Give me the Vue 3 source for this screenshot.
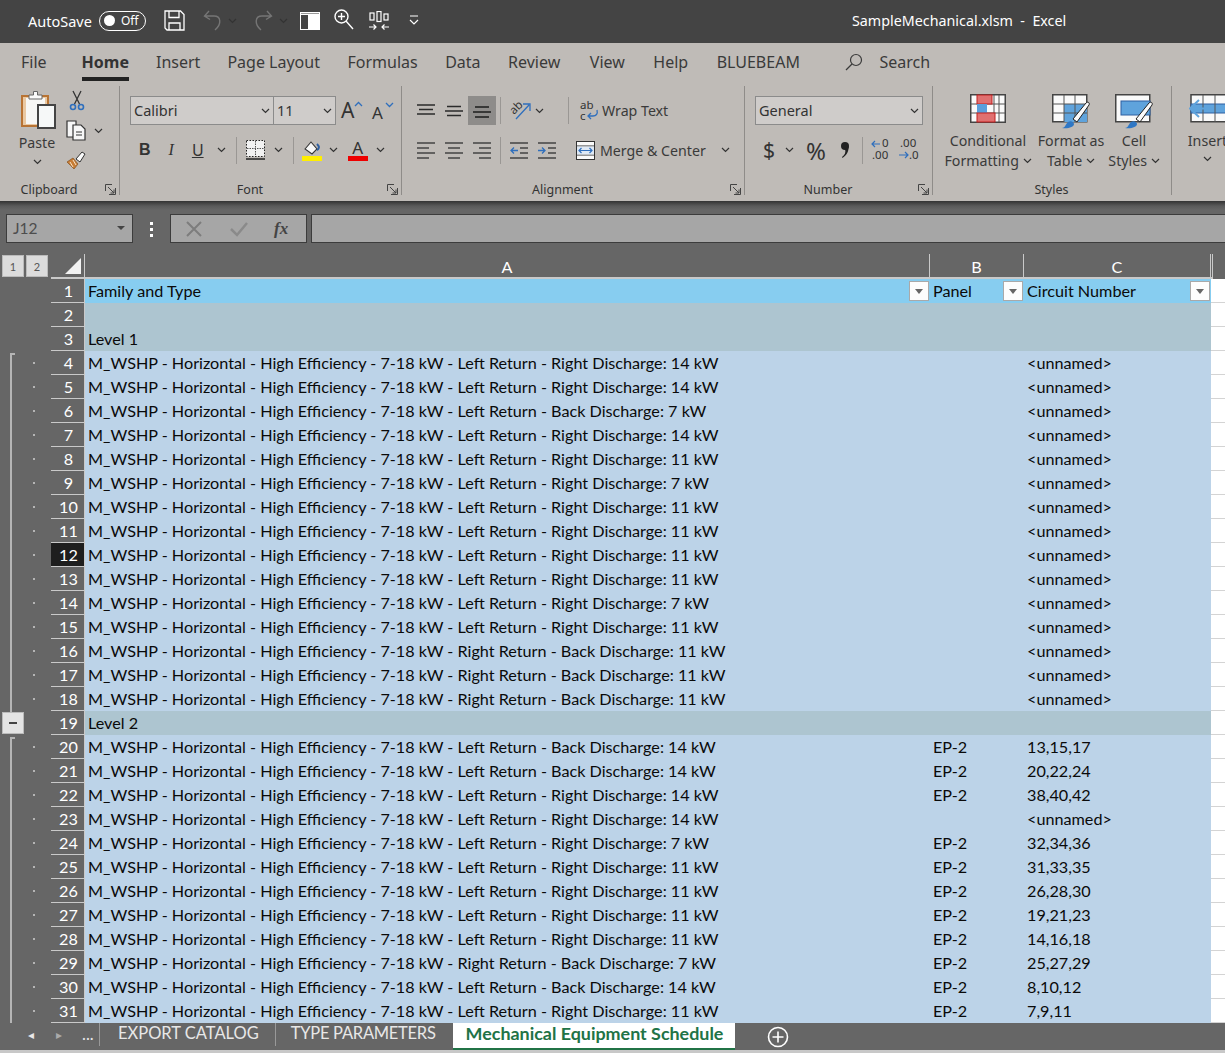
<script setup>
import { h } from 'vue'

const Chev = () =>
  h('svg', { width: 9, height: 6, viewBox: '0 0 9 6', class: 'chev-svg' }, [
    h('path', { d: 'M1 1l3.5 3.5L8 1', fill: 'none', stroke: 'currentColor', 'stroke-width': 1.2 })
  ])
const Launcher = () =>
  h('svg', { width: 11, height: 11, viewBox: '0 0 11 11', class: 'launcher' }, [
    h('path', { d: 'M7 .5H.5V7M10.5 4v6.5H4M3 3l6 6M9 5.5V9H5.5', fill: 'none', stroke: '#444', 'stroke-width': 1 })
  ])

const tabs = ['Insert', 'Page Layout', 'Formulas', 'Data', 'Review', 'View', 'Help', 'BLUEBEAM']

const prefix = 'M_WSHP - Horizontal - High Efficiency - 7-18 kW - '
const LR = 'Left Return - Right Discharge: '
const LB = 'Left Return - Back Discharge: '
const RB = 'Right Return - Back Discharge: '
const U = '<unnamed>'
const raw = [
  [LR + '14 kW', '', U], [LR + '14 kW', '', U], [LB + '7 kW', '', U], [LR + '14 kW', '', U],
  [LR + '11 kW', '', U], [LR + '7 kW', '', U], [LR + '11 kW', '', U], [LR + '11 kW', '', U],
  [LR + '11 kW', '', U], [LR + '11 kW', '', U], [LR + '7 kW', '', U], [LR + '11 kW', '', U],
  [RB + '11 kW', '', U], [RB + '11 kW', '', U], [RB + '11 kW', '', U],
  null,
  [LB + '14 kW', 'EP-2', '13,15,17'], [LB + '14 kW', 'EP-2', '20,22,24'], [LR + '14 kW', 'EP-2', '38,40,42'],
  [LR + '14 kW', '', U], [LR + '7 kW', 'EP-2', '32,34,36'], [LR + '11 kW', 'EP-2', '31,33,35'],
  [LR + '11 kW', 'EP-2', '26,28,30'], [LR + '11 kW', 'EP-2', '19,21,23'], [LR + '11 kW', 'EP-2', '14,16,18'],
  [RB + '7 kW', 'EP-2', '25,27,29'], [LB + '14 kW', 'EP-2', '8,10,12'], [LR + '11 kW', 'EP-2', '7,9,11']
]
const rows = [
  { n: 2, a: '', b: '', c: '', kind: 'level' },
  { n: 3, a: 'Level 1', b: '', c: '', kind: 'level' },
  ...raw.map((r, i) =>
    r
      ? { n: i + 4, a: prefix + r[0], b: r[1], c: r[2], kind: 'data' }
      : { n: i + 4, a: 'Level 2', b: '', c: '', kind: 'level' }
  )
]
</script>

<template>
  <div class="app">
    <!-- Title bar -->
    <header class="titlebar">
      <span class="autosave">AutoSave</span>
      <span class="toggle"><i class="knob"></i><span>Off</span></span>
      <svg class="qa save" width="21" height="21" viewBox="0 0 21 21" fill="none" stroke="#fff" stroke-width="1.3">
        <path d="M1 1h15.5L20 4.500V20H3L1 18z" />
        <path d="M5 1v6.500h10V1M5 20v-7h11v7" />
      </svg>
      <svg class="qa undo" width="19" height="21" viewBox="0 0 19 21" fill="none" stroke="#757575" stroke-width="1.4">
        <path d="M6 1L1.500 6 7 9.500M2 6h9c7 0 8 8 1 14" />
      </svg>
      <Chev class="qa-chev dim" />
      <svg class="qa redo" width="19" height="21" viewBox="0 0 19 21" fill="none" stroke="#757575" stroke-width="1.4">
        <path d="M13 1l4.500 5L12 9.500M17 6H8c-7 0-8 8-1 14" />
      </svg>
      <Chev class="qa-chev dim" />
      <svg class="qa pane" width="20" height="18" viewBox="0 0 20 18">
        <rect width="20" height="18" fill="#fff" />
        <rect x="1" y="3" width="7" height="14" fill="#444" />
        <rect x="1" y="1" width="18" height="1" fill="#999" />
      </svg>
      <svg class="qa zoomi" width="20" height="21" viewBox="0 0 20 21" fill="none" stroke="#fff" stroke-width="1.400">
        <circle cx="7.500" cy="7.500" r="6.500" />
        <path d="M12 12l7 8M7.500 4v7M4 7.500h7" />
      </svg>
      <svg class="qa arrange" width="20" height="20" viewBox="0 0 20 20" fill="none" stroke="#fff" stroke-width="1.200">
        <rect x="1" y="2" width="4" height="7" /><rect x="8" y=".5" width="4" height="10" /><rect x="15" y="3" width="4" height="6" />
        <path d="M0 16h7M4.500 13.500L7 16l-2.500 2.500M20 16h-7M15.500 13.500L13 16l2.500 2.500" />
      </svg>
      <svg class="qa customize" width="10" height="11" viewBox="0 0 10 11" fill="none" stroke="#fff" stroke-width="1.200">
        <path d="M1 1h8M1 5l4 4 4-4" />
      </svg>
      <span class="doc-title">SampleMechanical.xlsm&nbsp; -&nbsp; Excel</span>
    </header>

    <!-- Tabs -->
    <nav class="tabs">
      <span class="tab file">File</span>
      <span class="tab active">Home</span>
      <span v-for="t in tabs" :key="t" class="tab">{{ t }}</span>
      <svg class="search-ico" width="18" height="18" viewBox="0 0 18 18" fill="none" stroke="#3a3a3a" stroke-width="1.200">
        <circle cx="11" cy="7" r="5.500" /><path d="M7 11l-6 6" />
      </svg>
      <span class="search">Search</span>
    </nav>

    <!-- Ribbon -->
    <section class="ribbon">
      <div class="group g-clip">
        <div class="body clip">
          <div class="paste">
            <svg class="paste-ico" width="36" height="40" viewBox="0 0 36 40">
              <rect x="1" y="6" width="26" height="30" fill="#e9c8a2" stroke="#b87333" stroke-width="2" />
              <rect x="5" y="8" width="19" height="26" fill="#f7f7f5" />
              <path d="M8 9V5h4.500V1.500h4V5H21v4z" fill="#fafafa" stroke="#666" />
              <rect x="17" y="15" width="17" height="23" fill="#f6f8f8" stroke="#444" stroke-width="2" />
            </svg>
            <span class="lbl paste-lbl">Paste</span>
            <Chev />
          </div>
          <div class="clip-tools">
            <svg class="scissors" width="16" height="21" viewBox="0 0 16 21" fill="none">
              <path d="M4 1l6.500 13M12 1L5.500 14" stroke="#333" stroke-width="1.300" />
              <circle cx="4" cy="17" r="2.500" stroke="#2f6fbd" stroke-width="1.600" />
              <circle cx="12" cy="17" r="2.500" stroke="#2f6fbd" stroke-width="1.600" />
            </svg>
            <div class="copy-row">
              <svg width="21" height="21" viewBox="0 0 21 21" fill="#f7f7f7" stroke="#333" stroke-width="1.200">
                <path d="M1 1h9v16H1z" /><path d="M7 5h8l4 4v11H7z" /><path d="M10 12h6M10 15h6" fill="none" />
              </svg>
              <Chev class="copy-chev" />
            </div>
            <svg width="20" height="20" viewBox="0 0 20 20">
              <path d="M1 12l6-4 5 6-4 5c-2-2-5-5-7-7z" fill="#c77c35" stroke="#8a5a2b" stroke-width=".8" />
              <path d="M4 12l3 5M7 10l3 5" stroke="#f5e3c8" stroke-width="1" />
              <path d="M10 9l6-7 3 2-5 8z" fill="#fafafa" stroke="#333" stroke-width="1" />
            </svg>
          </div>
        </div>
        <div class="glabel">Clipboard</div>
        <Launcher />
      </div>

      <div class="group g-font">
        <div class="body">
          <div class="row r1">
            <div class="combo fontname"><span>Calibri</span><Chev /></div>
            <div class="combo fontsize"><span>11</span><Chev /></div>
            <span class="growA">A<svg width="9" height="6" viewBox="0 0 9 6" fill="none" stroke="#2f6fbd" stroke-width="1.300"><path d="M1 5l3.500-3.500L8 5" /></svg></span>
            <span class="growA small">A<svg width="9" height="6" viewBox="0 0 9 6" fill="none" stroke="#2f6fbd" stroke-width="1.300"><path d="M1 1l3.500 3.500L8 1" /></svg></span>
          </div>
          <div class="row r2 fontrow">
            <b class="fmt f-b">B</b>
            <i class="fmt f-i">I</i>
            <u class="fmt f-u">U</u>
            <Chev class="f-chev" />
            <span class="vsep s1"></span>
            <svg class="f-bord" width="20" height="20" viewBox="0 0 20 20" fill="#f2f2f2">
              <rect x=".5" y=".5" width="18" height="16" stroke="#222" stroke-dasharray="1.500 1.500" />
              <path d="M9.500 1v15M1 8.500h18" stroke="#555" stroke-dasharray="1.500 1" />
              <path d="M0 19h19" stroke="#222" stroke-width="1.500" />
            </svg>
            <Chev class="f-chev2" />
            <span class="vsep s2"></span>
            <svg class="f-fill" width="20" height="21" viewBox="0 0 20 21">
              <path d="M3 9l6-7 6 7-5 5z" fill="#f7f7f7" stroke="#333" stroke-width="1.100" />
              <path d="M15 10c2-1 3-3 0-6" fill="none" stroke="#2f5fa0" stroke-width="2" />
              <rect y="16" width="20" height="5" fill="#ffee00" />
            </svg>
            <Chev class="f-chev3" />
            <span class="colorA">A<i></i></span>
            <Chev class="f-chev4" />
          </div>
        </div>
        <div class="glabel">Font</div>
        <Launcher />
      </div>

      <div class="group g-align">
        <div class="body">
          <div class="row r1 alignrow">
            <svg class="al a1" width="18" height="14" viewBox="0 0 18 14" stroke="#2b2b2b" stroke-width="1.300"><path d="M0 1h18M2 5.500h14M0 10h18" /></svg>
            <svg class="al a2" width="18" height="14" viewBox="0 0 18 14" stroke="#2b2b2b" stroke-width="1.300"><path d="M2 2.500h14M0 7h18M2 11.500h14" /></svg>
            <span class="al-on"><svg width="18" height="14" viewBox="0 0 18 14" stroke="#1d1d1d" stroke-width="1.300"><path d="M2 3h14M0 8h18M2 13h14" /></svg></span>
            <span class="vsep s3"></span>
            <svg class="orient" width="22" height="20" viewBox="0 0 22 20">
              <text x="2" y="11" transform="rotate(-45 7 9)" class="svgt">ab</text>
              <path d="M7 18L20 4M14 3h7v7" fill="none" stroke="#2f6fbd" stroke-width="1.300" />
            </svg>
            <Chev class="or-chev" />
            <span class="vsep s4"></span>
            <svg class="wrap-ico" width="19" height="20" viewBox="0 0 19 20">
              <text x="0" y="8" class="svgt">ab</text><text x="0" y="19" class="svgt">c</text>
              <path d="M17 9c1 4-1 6-4 6H8M11 12l-3 3 3 3" fill="none" stroke="#2f6fbd" stroke-width="1.300" />
            </svg>
            <span class="lbl wrap-lbl">Wrap Text</span>
          </div>
          <div class="row r2 alignrow">
            <svg class="al a1" width="18" height="17" viewBox="0 0 18 17" stroke="#444" stroke-width="1.300"><path d="M0 1h18M0 6h12M0 11h18M0 16h12" /></svg>
            <svg class="al a2" width="18" height="17" viewBox="0 0 18 17" stroke="#444" stroke-width="1.300"><path d="M0 1h18M3 6h12M0 11h18M3 16h12" /></svg>
            <svg class="al a3" width="18" height="17" viewBox="0 0 18 17" stroke="#444" stroke-width="1.300"><path d="M0 1h18M6 6h12M0 11h18M6 16h12" /></svg>
            <span class="vsep s5"></span>
            <svg class="ind i1" width="18" height="17" viewBox="0 0 18 17" fill="none" stroke-width="1.300">
              <path d="M0 1h18M10 6h8M10 11h8M0 16h18" stroke="#444" /><path d="M8 8.500H1M4 5.500L1 8.500l3 3" stroke="#2f6fbd" />
            </svg>
            <svg class="ind i2" width="18" height="17" viewBox="0 0 18 17" fill="none" stroke-width="1.300">
              <path d="M0 1h18M10 6h8M10 11h8M0 16h18" stroke="#444" /><path d="M0 8.500h7M4 5.500l3 3-3 3" stroke="#2f6fbd" />
            </svg>
            <svg class="merge-ico" width="19" height="19" viewBox="0 0 19 19" fill="#fafafa">
              <rect x=".5" y=".5" width="18" height="18" stroke="#333" />
              <path d="M1 5h17M1 14h17" stroke="#333" />
              <rect x="1" y="5.500" width="17" height="8" fill="#dfe9f5" />
              <path d="M3 9.500h13M5.500 7L3 9.500 5.500 12M13.500 7l2.500 2.500-2.500 2.500" fill="none" stroke="#2f6fbd" stroke-width="1.200" />
            </svg>
            <span class="lbl merge-lbl">Merge &amp; Center</span>
            <Chev class="merge-chev" />
          </div>
        </div>
        <div class="glabel">Alignment</div>
        <Launcher />
      </div>

      <div class="group g-num">
        <div class="body">
          <div class="row r1">
            <div class="combo general"><span>General</span><Chev /></div>
          </div>
          <div class="row r2 numrow">
            <span class="dollar">$</span>
            <Chev class="d-chev" />
            <span class="pct">%</span>
            <svg class="comma" width="10" height="18" viewBox="0 0 10 18">
              <circle cx="5" cy="5" r="4" fill="#222" />
              <path d="M8.500 5c.5 5-1.500 9-6 12l-.5-1c3-2 4-5 3-8z" fill="#222" />
            </svg>
            <span class="vsep s6"></span>
            <svg class="dec d1" width="20" height="24" viewBox="0 0 20 24">
              <text x="11" y="9" class="svgn">0</text><text x="1" y="21" class="svgn">.00</text>
              <path d="M9 6H1M4 3L1 6l3 3" fill="none" stroke="#2f6fbd" stroke-width="1.200" />
            </svg>
            <svg class="dec d2" width="20" height="24" viewBox="0 0 20 24">
              <text x="1" y="9" class="svgn">.00</text><text x="10" y="21" class="svgn">.0</text>
              <path d="M0 17h9M6 14l3 3-3 3" fill="none" stroke="#2f6fbd" stroke-width="1.200" />
            </svg>
          </div>
        </div>
        <div class="glabel">Number</div>
        <Launcher />
      </div>

      <div class="group g-styles">
        <div class="body styles">
          <div class="bigbtn b-cond">
            <svg class="ico29" width="36" height="29" viewBox="0 0 36 29">
              <rect x=".75" y=".75" width="34.500" height="27.500" fill="#fafafa" stroke="#444" stroke-width="1.500" />
              <path d="M12 1v27M24 1v27M29 1v27M1 10h34M1 19h34" stroke="#555" />
              <rect x="7" y="1" width="15" height="9" fill="#e07070" stroke="#c02020" />
              <rect x="7" y="10" width="10" height="9" fill="#5a9fdc" />
              <rect x="7" y="19" width="18" height="9" fill="#e07070" stroke="#c02020" />
            </svg>
            <span class="lbl">Conditional</span>
            <span class="lbl">Formatting <Chev /></span>
          </div>
          <div class="bigbtn b-table">
            <svg class="ico35" width="38" height="35" viewBox="0 0 38 35">
              <rect x=".75" y=".75" width="34" height="27" fill="#fafafa" stroke="#444" stroke-width="1.500" />
              <rect x="12" y="10" width="23" height="18" fill="#5fa3dc" />
              <path d="M12 1v27M23 1v27M1 10h34M1 19h34" stroke="#555" />
              <path d="M21 25L34 9c2-2 4 0 3 2L25 28z" fill="#fafafa" stroke="#222" />
              <path d="M10 34c3 0 3-3 6-6 3-2 6 0 6 2 0 3-6 5-12 4z" fill="#2f77c4" />
            </svg>
            <span class="lbl">Format as</span>
            <span class="lbl">Table <Chev /></span>
          </div>
          <div class="bigbtn b-cell">
            <svg class="ico35" width="38" height="35" viewBox="0 0 38 35">
              <rect x=".75" y=".75" width="34" height="27" fill="#fafafa" stroke="#444" stroke-width="1.500" />
              <rect x="6" y="7" width="29" height="14" fill="#5fa3dc" stroke="#2f5fa0" />
              <path d="M21 25L34 9c2-2 4 0 3 2L25 28z" fill="#fafafa" stroke="#222" />
              <path d="M10 34c3 0 3-3 6-6 3-2 6 0 6 2 0 3-6 5-12 4z" fill="#2f77c4" />
            </svg>
            <span class="lbl">Cell</span>
            <span class="lbl">Styles <Chev /></span>
          </div>
        </div>
        <div class="glabel">Styles</div>
      </div>

      <div class="group g-cells">
        <div class="body cells">
          <div class="bigbtn b-insert">
            <svg class="ico29" width="38" height="29" viewBox="0 0 38 29">
              <rect x="2" y=".75" width="36" height="27" fill="#fafafa" stroke="#444" stroke-width="1.500" />
              <rect x="2" y="10" width="36" height="9" fill="#5fa3dc" stroke="#2f5fa0" />
              <path d="M14 1v27M26 1v27" stroke="#555" />
              <path d="M24 14.500H2M10 6l-9 8.500 9 8.500" fill="none" stroke="#5fa3dc" stroke-width="2" />
            </svg>
            <span class="lbl">Insert</span>
            <Chev />
          </div>
        </div>
      </div>
    </section>

    <!-- Formula bar -->
    <section class="formula">
      <div class="namebox"><span>J12</span><i class="caret"></i></div>
      <div class="dots"><i></i><i></i><i></i></div>
      <div class="fxbtns">
        <svg width="18" height="16" viewBox="0 0 18 16" stroke="#7d7d7d" stroke-width="2" fill="none"><path d="M2 1l14 14M16 1L2 15" /></svg>
        <svg width="18" height="16" viewBox="0 0 18 16" stroke="#8a8a8a" stroke-width="2.500" fill="none"><path d="M1 8l6 6L17 2" /></svg>
        <span class="fx">fx</span>
      </div>
      <div class="fxinput"></div>
    </section>

    <!-- Sheet -->
    <section class="sheet">
      <div class="line head">
        <div class="gutter topbtns"><span class="lvl">1</span><span class="lvl">2</span></div>
        <div class="rh corner"><i></i></div>
        <div class="ch a">A</div>
        <div class="ch b">B</div>
        <div class="ch c">C</div>
        <div class="ch d"></div>
      </div>

      <div class="line">
        <div class="gutter"></div>
        <div class="rh">1</div>
        <div class="cell a hdr">Family and Type<span class="flt"><i></i></span></div>
        <div class="cell b hdr">Panel<span class="flt"><i></i></span></div>
        <div class="cell c hdr">Circuit Number<span class="flt"><i></i></span></div>
        <div class="rest"></div>
      </div>

      <div v-for="r in rows" :key="r.n" class="line">
        <div class="gutter">
          <span v-if="r.kind === 'data'" class="dot"></span>
          <span v-if="r.n === 19" class="minus"><i></i></span>
        </div>
        <div class="rh" :class="{ sel: r.n === 12 }">{{ r.n }}</div>
        <div class="cell a" :class="r.kind">{{ r.a }}</div>
        <div class="cell b" :class="r.kind">{{ r.b }}</div>
        <div class="cell c" :class="r.kind">{{ r.c }}</div>
        <div class="rest"></div>
      </div>

      <span class="bracket br1"></span>
      <span class="bracket br2"></span>
    </section>

    <!-- Sheet tabs -->
    <footer class="sheettabs">
      <span class="nav-a">◂</span>
      <span class="nav-b">▸</span>
      <span class="more">...</span>
      <span class="stab first">EXPORT CATALOG</span>
      <span class="stab second">TYPE PARAMETERS</span>
      <span class="stab on">Mechanical Equipment Schedule</span>
      <svg class="plus" width="22" height="22" viewBox="0 0 22 22" fill="none" stroke="#fff" stroke-width="1.600">
        <circle cx="11" cy="11" r="9.500" /><path d="M11 5.500v11M5.500 11h11" />
      </svg>
    </footer>
    <div class="statusline"></div>
  </div>
</template>

<style>
html, body { margin: 0; background: #666; overflow: hidden; }
</style>

<style scoped>
.app { width: 1225px; height: 1053px; overflow: hidden; position: relative; background: #666; font-family: "Noto Sans", sans-serif; color: #333; }

/* title */
.titlebar { height: 43px; background: #444; color: #fff; display: flex; align-items: center; padding: 0 0 2px 28px; box-sizing: border-box; font-size: 14.5px; flex-shrink: 0; }
.autosave { width: 71px; }
.toggle { width: 47px; height: 20px; box-sizing: border-box; border: 1.5px solid #fff; border-radius: 10px; display: flex; align-items: center; font-size: 12px; padding-left: 4px; }
.knob { width: 11px; height: 11px; border-radius: 50%; background: #fff; margin-right: 6px; }
.qa { flex: none; }
.save { margin-left: 18px; }
.undo { margin-left: 18px; }
.qa-chev { margin-left: 6px; width: 9px; }
.dim { color: #757575; }
.redo { margin-left: 17px; }
.pane { margin-left: 12px; }
.zoomi { margin-left: 14px; margin-top: -3px; }
.arrange { margin-left: 15px; }
.customize { margin-left: 20px; }
.doc-title { margin-left: 433px; font-size: 14.3px; white-space: nowrap; }

/* tabs */
.tabs { height: 37px; background: #bfbbb7; display: flex; align-items: center; padding-left: 21px; font-size: 16px; color: #3a3a3a; }
.tab { margin-right: 27.500px; position: relative; white-space: nowrap; }
.tab.file { margin-right: 35px; }
.tab.active { font-weight: 700; color: #333; font-size: 16px; margin-right: 27px; }
.tab.active::after { content: ""; position: absolute; left: 0; right: 0; top: 26px; height: 4px; background: #222; }
.tab:nth-child(3) { margin-right: 27px; }
.tab:nth-child(7) { margin-right: 29.500px; }
.tab:nth-child(8), .tab:nth-child(9) { margin-right: 28.500px; }
.search-ico { margin-left: 18px; margin-right: 16px; }
.search { white-space: nowrap; }

/* ribbon */
.ribbon { height: 121px; background: #bfbbb7; display: flex; padding-top: 6px; box-sizing: border-box; overflow: hidden; }
.group { position: relative; height: 115px; display: flex; flex-direction: column; box-sizing: border-box; flex: none; }
.group::after { content: ""; position: absolute; right: 0; top: 0; height: 109px; width: 1px; background: #8f8c89; }
.g-clip { width: 120px; }
.g-font { width: 282px; }
.g-align { width: 343px; }
.g-num { width: 188px; }
.g-styles { width: 239px; }
.g-cells { flex: 1; }
.g-cells::after { display: none; }
.body { flex: 1; padding-top: 10px; min-height: 0; }
.glabel { height: 22px; line-height: 22px; font-size: 12.5px; text-align: center; color: #333; padding-right: 22px; }
.g-styles .glabel { padding-right: 2px; }
.launcher { position: absolute; right: 4px; bottom: 6px; }
.chev-svg { color: #333; flex: none; }
.lbl { font-size: 14.2px; line-height: 20px; white-space: nowrap; color: #3a3a3a; }
.row { display: flex; align-items: center; }
.r1 { height: 29px; }
.r2 { height: 30px; margin-top: 10px; }

/* clipboard */
.clip { display: flex; padding: 4px 0 0 19px; }
.paste { width: 36px; display: flex; flex-direction: column; align-items: center; }
.paste-ico { margin-left: 3px; flex: none; }
.paste-lbl { margin-top: 3px; line-height: 20px; }
.paste .chev-svg { margin-top: 6px; }
.clip-tools { margin-left: 11px; display: flex; flex-direction: column; gap: 9px; margin-top: 0; }
.copy-row { display: flex; align-items: center; }
.copy-chev { margin-left: 7px; }
.scissors { margin-left: 3px; }

/* font */
.g-font .body { padding-left: 10px; }
.combo { box-sizing: border-box; height: 29px; background: #cfccca; border: 1px solid #8b8b8b; display: flex; align-items: center; justify-content: space-between; padding: 0 3px 2px; font-size: 14.5px; color: #333; }
.combo .chev-svg { margin-top: 2px; }
.fontname { width: 144px; }
.fontsize { width: 62px; margin-left: 0; border-left: 0; }
.growA { font-size: 21px; margin-left: 5px; position: relative; width: 25px; line-height: 1; color: #333; }
.growA svg { position: absolute; left: 13px; top: 1px; }
.growA.small { font-size: 17px; margin-left: 6px; padding-top: 3px; box-sizing: content-box; }
.fontrow { position: relative; font-family: "Liberation Serif", serif; }
.fmt { font-size: 16px; color: #333; font-family: "Noto Sans", sans-serif; }
.f-b { margin-left: 9px; font-family: "Liberation Sans", sans-serif; }
.f-i { margin-left: 18px; font-family: "Liberation Serif", serif; }
.f-u { margin-left: 18px; }
.f-chev { margin-left: 13px; }
.vsep { width: 1px; height: 27px; background: #9a9794; flex: none; }
.s1 { margin-left: 10px; }
.f-bord { margin-left: 9px; }
.f-chev2 { margin-left: 8px; }
.s2 { margin-left: 10px; }
.f-fill { margin-left: 8px; }
.f-chev3 { margin-left: 7px; }
.colorA { margin-left: 10px; width: 20px; height: 21px; position: relative; text-align: center; font: 17px/16px "Noto Sans", sans-serif; color: #333; }
.colorA i { position: absolute; left: 0; right: 0; bottom: 0; height: 5px; background: #ee0000; }
.f-chev4 { margin-left: 8px; }

/* align */
.g-align .body { padding-left: 15px; }
.al { flex: none; }
.a2, .a3 { margin-left: 10px; }
.alignrow .al-on { width: 28px; height: 29px; background: #8e8c8a; display: flex; align-items: center; justify-content: center; margin-left: 5px; }
.s3 { margin-left: 4px; }
.orient { margin-left: 8px; overflow: visible; }
.or-chev { margin-left: 4px; }
.s4 { margin-left: 24px; }
.wrap-ico { margin-left: 11px; overflow: visible; }
.wrap-lbl { margin-left: 3px; }
.s5 { margin-left: 9px; }
.ind { flex: none; }
.i1 { margin-left: 9px; }
.i2 { margin-left: 10px; }
.merge-ico { margin-left: 20px; }
.merge-lbl { margin: 1px 0 0 5px; }
.merge-chev { margin-left: 15px; }
.svgt { font: 11.500px "Noto Sans", sans-serif; fill: #333; }
.svgn { font: 11.500px "Noto Sans", sans-serif; fill: #333; }

/* number */
.g-num .body { padding-left: 10px; }
.general { width: 168px; }
.numrow { font-family: "Noto Sans", sans-serif; }
.dollar { margin-left: 8px; width: 12px; font-size: 21px; color: #333; }
.d-chev { margin-left: 10px; }
.pct { margin-left: 12px; font-size: 24px; width: 22px; color: #333; }
.comma { margin-left: 12px; }
.s6 { margin-left: 12px; }
.dec { overflow: visible; }
.d1 { margin-left: 8px; }
.d2 { margin-left: 8px; }

/* styles */
.styles { display: flex; padding-left: 12px; padding-top: 8px; }
.bigbtn { display: flex; flex-direction: column; align-items: center; flex: none; }
.ico29 { height: 29px; margin-bottom: 8px; flex: none; }
.ico35 { height: 35px; margin-bottom: 2px; flex: none; }
.b-cond { width: 86px; }
.b-table { width: 72px; margin-left: 4px; }
.b-cell { width: 54px; margin-left: 0; }
.bigbtn .chev-svg { vertical-align: 2px; }
.cells { padding-top: 8px; }
.b-insert { width: 53px; padding-left: 9px; }
.b-insert .chev-svg { margin-top: 5px; }

/* formula */
.formula { height: 53px; background: linear-gradient(#333 0, #5a5a5a 5px, #666 9px); display: flex; align-items: flex-start; padding: 13px 0 0 6px; box-sizing: border-box; }
.namebox, .fxbtns, .fxinput { height: 29px; box-sizing: border-box; border: 1px solid #3c3c3c; background: #a6a6a6; display: flex; align-items: center; }
.namebox { width: 127px; justify-content: space-between; padding: 0 7px 2px 6px; font: 15.500px "Lato", sans-serif; color: #4d4d4d; }
.caret { width: 0; height: 0; border: 4px solid transparent; border-top-color: #444; border-bottom: 0; }
.dots { width: 37px; display: flex; flex-direction: column; gap: 3px; align-items: center; padding-top: 8px; }
.dots i { width: 3px; height: 3px; background: #fff; }
.fxbtns { width: 137px; padding-left: 14px; gap: 27px; }
.fx { font: italic 700 17px "Liberation Serif", serif; color: #444; margin-left: -1px; }
.fxinput { flex: 1; margin-left: 4px; border-right: 0; }

/* sheet */
.sheet { position: relative; font-family: "Lato", sans-serif; font-size: 16.200px; color: #0a0a0a; }
.line { display: flex; height: 24px; }
.line.head { height: 25px; }
.gutter { width: 51px; flex: none; position: relative; }
.topbtns { display: flex; gap: 2px; padding: 1px 0 0 2px; box-sizing: border-box; }
.lvl { width: 22px; height: 22px; background: #dcdcdc; color: #555; font-size: 11px; display: flex; align-items: center; justify-content: center; border: 1px solid #bbb; box-sizing: border-box; }
.rh { width: 34px; flex: none; box-sizing: border-box; text-align: center; line-height: 23px; color: #fff; border-bottom: 1px solid #c9c9c9; border-right: 1px solid #c9c9c9; padding-left: 2px; }
.rh.sel { background: #1e1e1e; }
.rh.corner { border-bottom: 2px solid #c9c9c9; position: relative; padding: 0; }
.corner i { position: absolute; right: 3px; bottom: 3px; width: 0; height: 0; border-style: solid; border-width: 0 0 16px 16px; border-color: transparent transparent #f2f2f2 transparent; }
.ch { box-sizing: border-box; text-align: center; line-height: 26px; color: #fff; border-right: 1px solid #c9c9c9; border-bottom: 2px solid #c9c9c9; flex: none; }
.a { width: 845px; }
.b { width: 94px; }
.c { width: 187px; }
.ch.d { width: 2px; }
.cell { box-sizing: border-box; flex: none; padding-left: 3px; line-height: 24px; position: relative; white-space: nowrap; overflow: hidden; background: #bcd3e8; }
.cell.level { background: #adc5d0; }
.cell.hdr { background: #87cdf0; }
.cell.c { padding-left: 3px; }
.rest { flex: 1; background: #fff; border-bottom: 1px solid #d4d4d4; box-sizing: border-box; }
.flt { position: absolute; right: 1px; top: 2px; width: 20px; height: 20px; box-sizing: border-box; background: #fdfdfd; border: 1px solid #a9a9a9; display: flex; align-items: center; justify-content: center; }
.flt i { width: 0; height: 0; border: 4px solid transparent; border-top: 5px solid #666; border-bottom: 0; }
.dot { position: absolute; left: 33px; top: 11px; width: 2px; height: 2px; background: #b5b5b5; }
.minus { position: absolute; left: 2px; top: 1px; width: 22px; height: 22px; box-sizing: border-box; background: #e4e4e4; border: 1px solid #bbb; display: flex; align-items: center; justify-content: center; }
.minus i { width: 8px; height: 2px; background: #444; }
.bracket { position: absolute; left: 10px; width: 5px; border-left: 2px solid #b5b5b5; border-top: 2px solid #b5b5b5; box-sizing: border-box; }
.br1 { top: 99px; height: 359px; }
.br2 { top: 483px; height: 286px; }

/* sheet tabs */
.sheettabs { height: 27px; display: flex; align-items: flex-start; font-family: "Lato", sans-serif; font-size: 16.500px; color: #e8e8e8; background: #666; position: relative; }
.nav-a { margin-left: 28px; width: 28px; font-size: 12px; line-height: 20px; padding-top: 2px; }
.nav-b { width: 26px; font-size: 12px; line-height: 20px; padding-top: 2px; color: #aaa; }
.more { width: 17px; line-height: 22px; margin-left: 0; }
.stab { height: 23px; line-height: 21px; padding: 0 16px 0 18px; border-left: 1px solid #999; white-space: nowrap; }
.stab.second { padding-left: 15px; letter-spacing: -0.27px; }
.stab.on { background: #fff; color: #217346; font-weight: 700; font-size: 17.900px; border-left: 0; border-bottom: 2px solid #217346; height: 25px; padding: 0 12px 0 13px; margin-left: 1px; }
.plus { margin: 3px 0 0 32px; }
.statusline { height: 3px; background: #c8c8c8; }
</style>
